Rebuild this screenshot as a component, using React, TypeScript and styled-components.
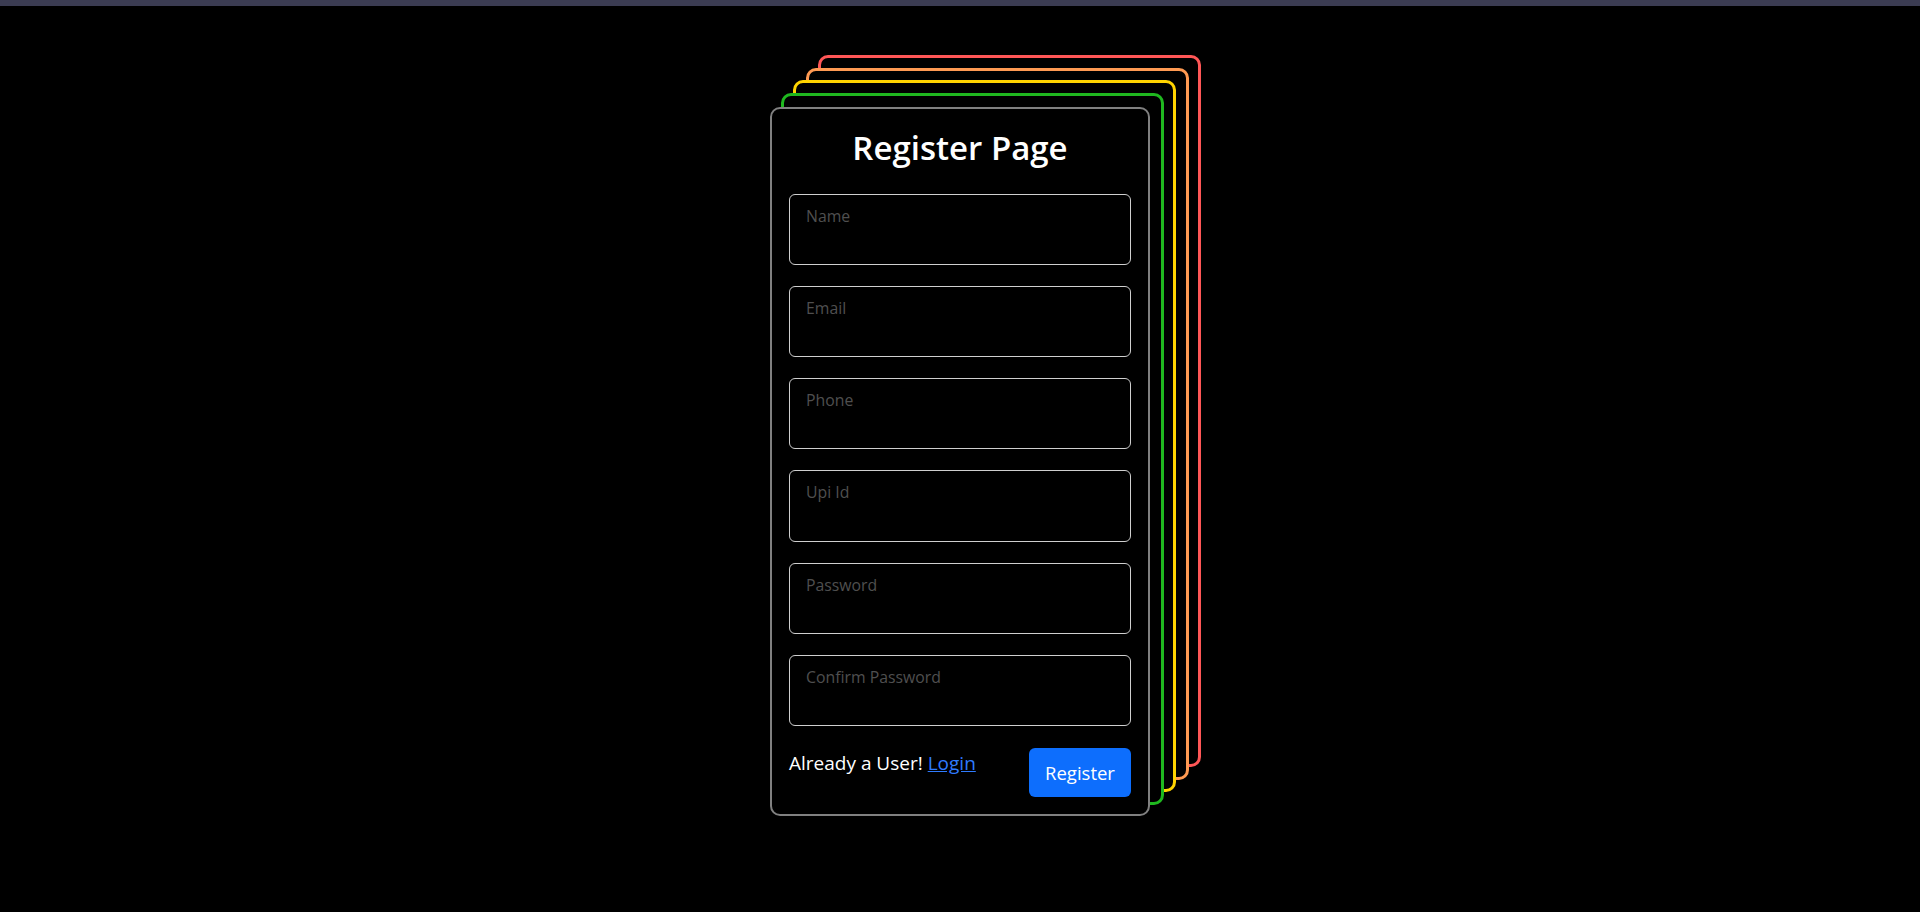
import styled, { createGlobalStyle } from "styled-components";

const GlobalStyle = createGlobalStyle`
  * {
    box-sizing: border-box;
  }
  html, body {
    margin: 0;
    padding: 0;
    background: #000;
    font-family: "Open Sans", "Noto Sans", sans-serif;
    color: #fff;
  }
`

const TopBar = styled.div`
  height: 6px;
  background: #3b3c52;
`

const Page = styled.main`
  min-height: calc(100vh - 6px);
  display: flex;
  justify-content: center;
  align-items: flex-start;
  padding-top: 101px;
`

const Stack = styled.div`
  position: relative;
  width: 380px;
`

interface LayerProps {
    $step: number
    $color: string
}

const Layer = styled.div<LayerProps>`
  position: absolute;
  left: ${({$step}) => 12.4 * $step - 1.5}px;
  top: ${({$step}) => -12.4 * $step - 2}px;
  width: 383px;
  height: 712px;
  border: 3px solid ${({$color}) => $color};
  border-radius: 10px;
  background: #000;
  z-index: ${({$step}) => 10 - $step};
`

const Card = styled.form`
  position: relative;
  z-index: 20;
  width: 380px;
  height: 709px;
  background: #000;
  border: 2px solid #808080;
  border-radius: 10px;
  padding: 17px 17px 16px;
  display: flex;
  flex-direction: column;
`

const Title = styled.h2`
  margin: 1.5px 0 0;
  font-size: 33px;
  font-weight: 600;
  line-height: 1.2;
  text-align: center;
  color: #fff;
`

const Fields = styled.div`
  margin-top: 26.5px;
  display: flex;
  flex-direction: column;
  gap: 21px;
`

const Field = styled.textarea`
  display: block;
  width: 100%;
  height: 71.3px;
  resize: none;
  background: #000;
  border: 1px solid #cfcfcf;
  border-radius: 6px;
  padding: 10px 16px;
  font-family: inherit;
  font-size: 15.8px;
  line-height: 1.5;
  color: #fff;
  outline: none;

  &::placeholder {
    color: #4f4f4f;
  }
`

const Footer = styled.div`
  margin-top: 22px;
  display: flex;
  justify-content: space-between;
  align-items: flex-start;
`

const Hint = styled.p`
  margin: 0;
  font-size: 19px;
  line-height: 30px;
  color: #fff;
`

const LoginLink = styled.a`
  color: #2f7bff;
  text-decoration: underline;
  cursor: pointer;
`

const Button = styled.button`
  width: 102px;
  height: 49px;
  border: none;
  border-radius: 6px;
  background: #0d6efd;
  color: #fff;
  font-family: inherit;
  font-size: 18.5px;
  cursor: pointer;
`

const layers = ["#1fb81f", "#ffd400", "#ff9a52", "#ff5757"]

const fields = ["Name", "Email", "Phone", "Upi Id", "Password", "Confirm Password"]

const App = () => {
    return (
        <>
            <GlobalStyle/>
            <TopBar/>
            <Page>
                <Stack>
                    {layers.map((color, index) => <Layer key={color} $step={index + 1} $color={color}/>)}
                    <Card onSubmit={(e) => e.preventDefault()}>
                        <Title>Register Page</Title>
                        <Fields>
                            {fields.map((name) => <Field key={name} placeholder={name} rows={2}/>)}
                        </Fields>
                        <Footer>
                            <Hint>Already a User! <LoginLink>Login</LoginLink></Hint>
                            <Button type="submit">Register</Button>
                        </Footer>
                    </Card>
                </Stack>
            </Page>
        </>
    )
}

export default App
